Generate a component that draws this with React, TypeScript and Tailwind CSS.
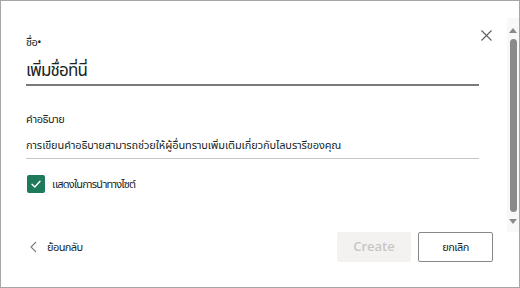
import React from "react";

export default function App() {
  const font = { fontFamily: '"Noto Sans", "Noto Sans Thai", Tahoma, sans-serif' };
  return (
    <div className="w-[520px] h-[288px] bg-white border border-[#a6a6a6] flex relative overflow-hidden" style={font}>
      <div className="flex-1 flex flex-col pl-[25px] pr-[14px]">
        <div className="flex flex-col mr-[14px]">
          <div className="mt-[33px] text-[11px] leading-[16px] tracking-[-0.5px] text-[#201f1e]">ชื่อ•</div>
          <div className="mt-[9px] text-[17px] leading-[22px] tracking-[-0.8px] text-[#201f1e] h-[22px]">เพิ่มชื่อที่นี่</div>
          <div className="mt-[3px] h-[2px] bg-[#7a7a7a]" />
          <div className="mt-[25px] text-[11px] leading-[16px] tracking-[-0.5px] text-[#201f1e]">คำอธิบาย</div>
          <div className="mt-[10px] text-[11px] leading-[16px] tracking-[-0.1px] text-[#201f1e]">
            การเขียนคำอธิบายสามารถช่วยให้ผู้อื่นทราบเพิ่มเติมเกี่ยวกับไลบรารีของคุณ
          </div>
          <div className="mt-[5px] h-px bg-[#c8c6c4]" />
          <div className="mt-[16px] flex items-center gap-[7px] pl-px">
            <div className="w-[18px] h-[18px] rounded-[2px] bg-[#1f7a5c] flex items-center justify-center">
              <svg width="12" height="12" viewBox="0 0 12 12" fill="none">
                <path d="M2 6.2 L4.8 9 L10 3.2" stroke="white" strokeWidth="1.4" strokeLinecap="round" strokeLinejoin="round" />
              </svg>
            </div>
            <span className="text-[11px] leading-[16px] tracking-[-0.8px] text-[#201f1e]">แสดงในการนำทางไซต์</span>
          </div>
        </div>
        <div className="mt-auto mb-[25px] flex items-center justify-between">
          <div className="flex items-center gap-[10px] pl-[4px]">
            <svg width="7" height="12" viewBox="0 0 7 12" fill="none">
              <path d="M6 1 L1 6 L6 11" stroke="#7a7a7a" strokeWidth="1.1" />
            </svg>
            <span className="text-[11px] leading-[16px] tracking-[-0.6px] text-[#201f1e]">ย้อนกลับ</span>
          </div>
          <div className="flex items-center gap-[7px]">
            <div className="w-[74px] h-[30px] bg-[#f3f2f1] rounded-[2px] flex items-center justify-center text-[13px] font-semibold text-[#c8c6c4]" style={{ fontFamily: '"Open Sans", sans-serif' }}>
              Create
            </div>
            <div className="w-[75px] h-[30px] bg-white border border-[#8a8886] rounded-[2px] flex items-center justify-center text-[11px] tracking-[-0.5px] text-[#201f1e]">
              ยกเลิก
            </div>
          </div>
        </div>
      </div>
      <button className="absolute left-[479px] top-[28px] w-[12px] h-[12px] flex items-center justify-center">
        <svg width="11" height="11" viewBox="0 0 11 11" fill="none">
          <path d="M0.5 0.5 L10.5 10.5 M10.5 0.5 L0.5 10.5" stroke="#605e5c" strokeWidth="1.1" />
        </svg>
      </button>
      <div className="w-[12px] mt-[17px] mb-[55px] bg-[#f8f8f8] flex flex-col items-center pt-[9px] pb-[7px]">
        <svg width="8" height="6" viewBox="0 0 8 6"><path d="M0 6 L4 1 L8 6 Z" fill="#8a8a8a" /></svg>
        <div className="mt-[6px] w-[7px] flex-1 rounded-[4px] bg-[#8a8a8a]" />
        <svg className="mt-[7px]" width="8" height="6" viewBox="0 0 8 6"><path d="M0 0 L4 5 L8 0 Z" fill="#8a8a8a" /></svg>
      </div>
    </div>
  );
}
